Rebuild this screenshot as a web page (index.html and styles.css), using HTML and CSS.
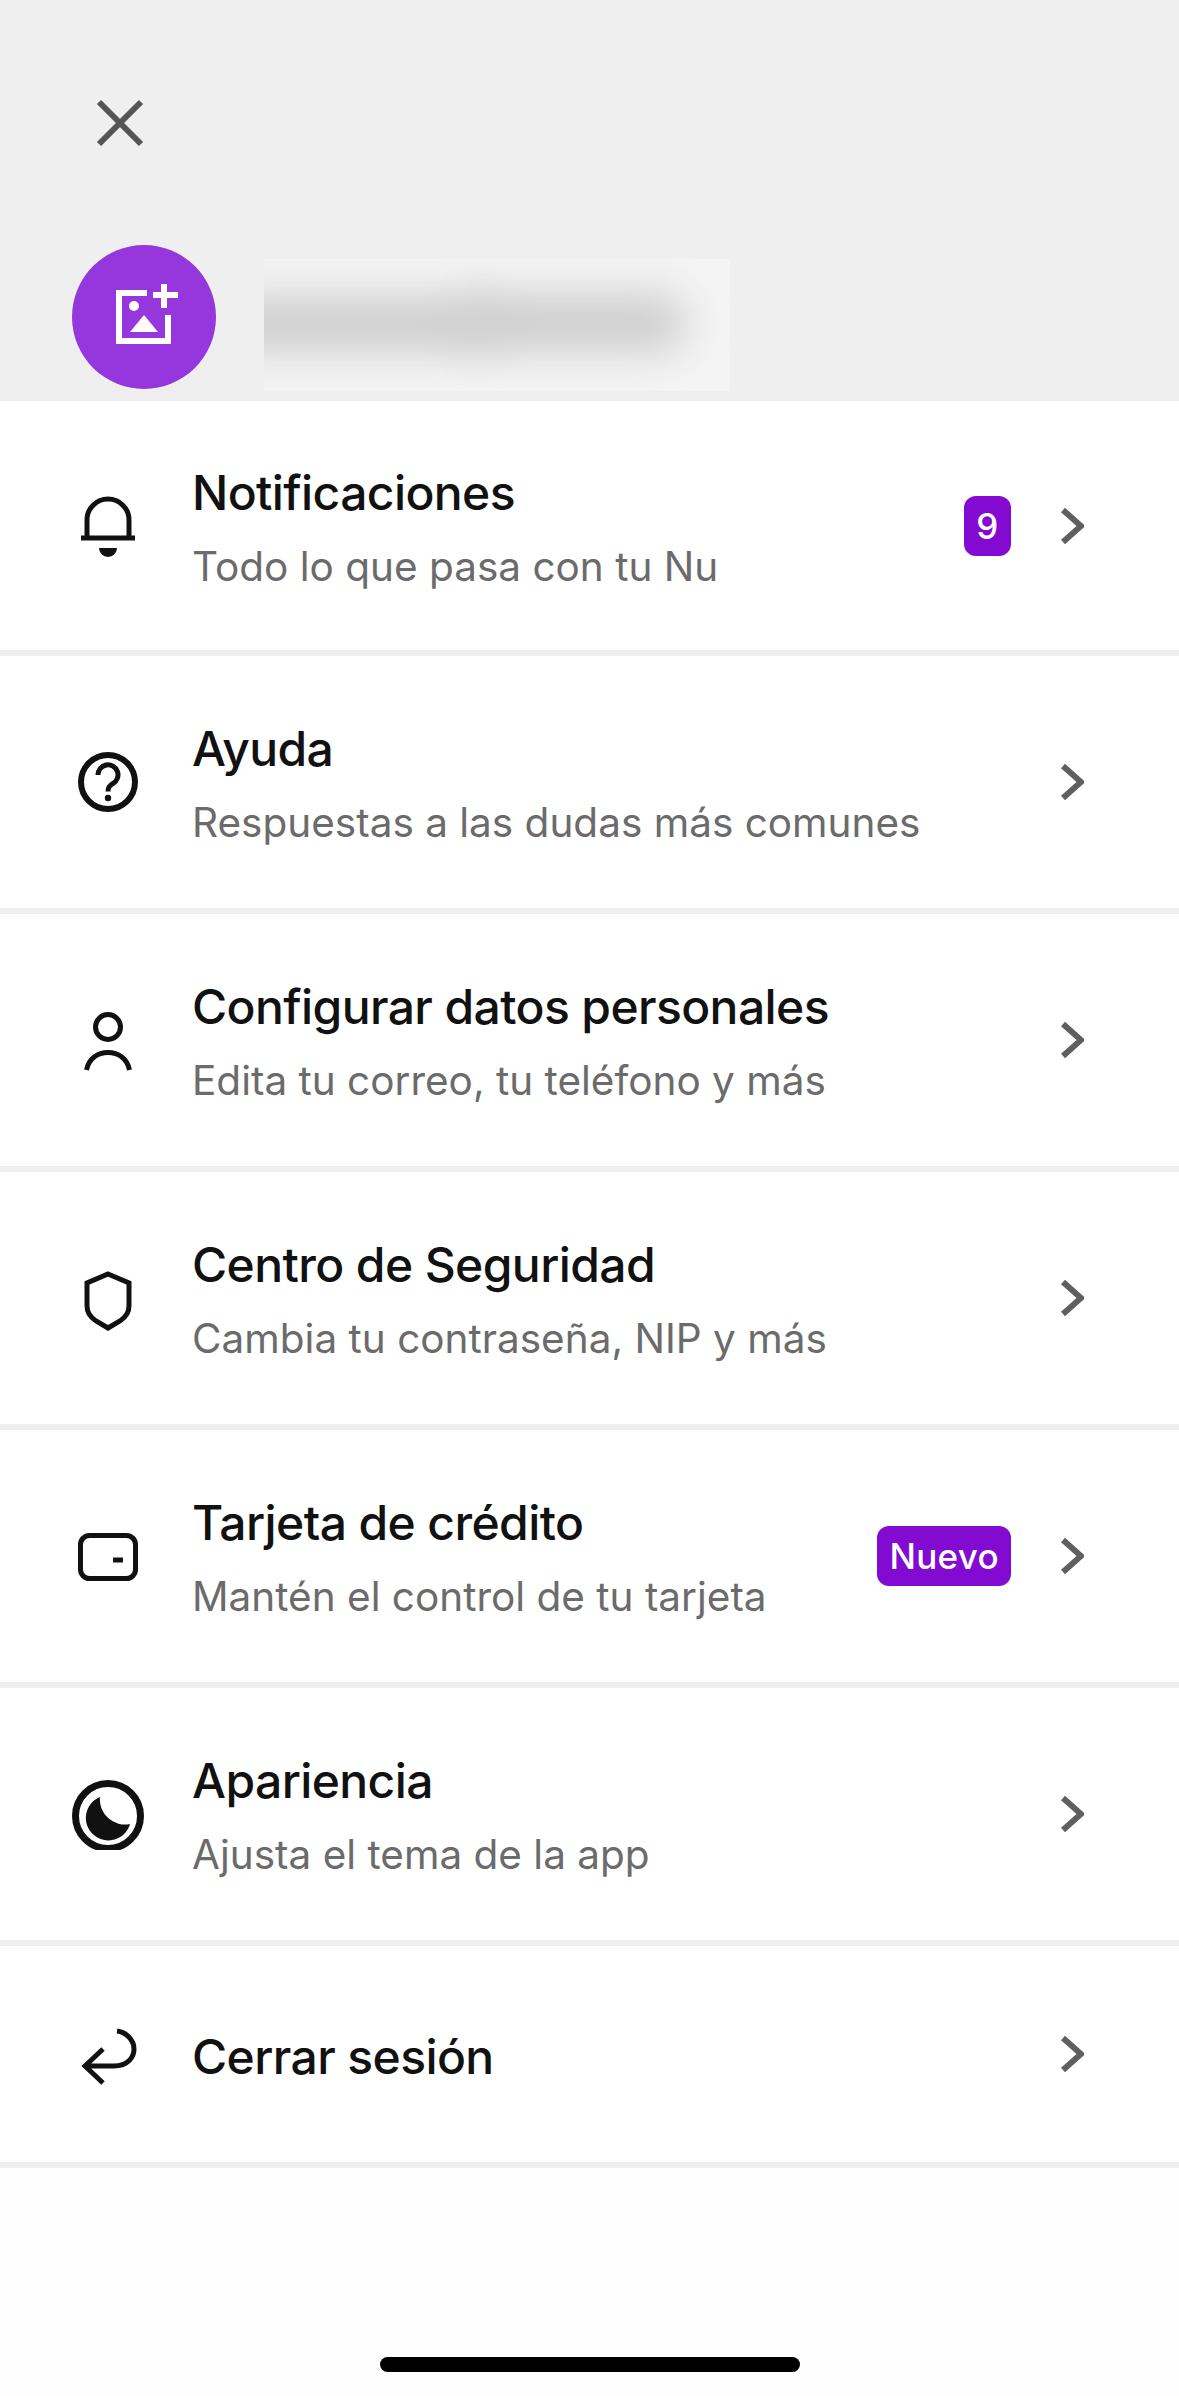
FILE: index.html
```html
<!DOCTYPE html>
<html lang="es">
<head>
    <meta charset="UTF-8">
    <meta name="viewport" content="width=device-width, initial-scale=1.0">
    <title>Perfil</title>
    <link rel="stylesheet" href="styles.css">
</head>
<body>

<header class="top">
    <button class="close" aria-label="Cerrar">
        <svg viewBox="0 0 48 48" width="48" height="48"><path d="M3 3 L45 45 M45 3 L3 45"/></svg>
    </button>
    <div class="profile">
        <div class="avatar">
            <svg viewBox="0 0 144 144" width="144" height="144">
                <path class="line" d="M75 48 H47 V96 H96 V70"/>
                <path class="line" d="M92 39 V63 M81 50 H106"/>
                <circle cx="62" cy="61" r="5"/>
                <path d="M72 70 L86 87 H58 Z"/>
            </svg>
        </div>
        <div class="name-blur"><span class="blob-a"></span><span class="blob-b"></span></div>
    </div>
</header>

<main class="menu">
    <a class="row">
        <svg class="icon" viewBox="0 0 72 72"><path d="M15 48 V30 a21 21 0 0 1 42 0 V48 M9 48 H63"/><path class="solid" d="M27 58 H45 a9 9 0 0 1 -18 0 Z"/></svg>
        <div class="text">
            <div class="title">Notificaciones</div>
            <div class="sub">Todo lo que pasa con tu Nu</div>
        </div>
        <span class="badge">9</span>
        <svg class="chevron" viewBox="0 0 24 40"><path d="M3 4 L21 20 L3 36"/></svg>
    </a>
    <a class="row">
        <svg class="icon" viewBox="0 0 72 72"><circle cx="36" cy="36" r="27" stroke-width="6"/><path d="M26 29 a10 10 0 1 1 15 8.500 c-3.500 2 -5 3.500 -5 8"/><circle class="solid" cx="36" cy="52" r="3.200"/></svg>
        <div class="text">
            <div class="title">Ayuda</div>
            <div class="sub">Respuestas a las dudas más comunes</div>
        </div>
        <svg class="chevron" viewBox="0 0 24 40"><path d="M3 4 L21 20 L3 36"/></svg>
    </a>
    <a class="row">
        <svg class="icon" viewBox="0 0 72 72"><circle cx="36" cy="23" r="12.500"/><path d="M14.500 66 C17 54 26 48.500 36 48.500 C46 48.500 55 54 57.500 66"/></svg>
        <div class="text">
            <div class="title">Configurar datos personales</div>
            <div class="sub">Edita tu correo, tu teléfono y más</div>
        </div>
        <svg class="chevron" viewBox="0 0 24 40"><path d="M3 4 L21 20 L3 36"/></svg>
    </a>
    <a class="row">
        <svg class="icon" viewBox="0 0 72 72"><path d="M36 12 L57 21 V44 C57 51 54 55 48 59 L36 66 L24 59 C18 55 15 51 15 44 V21 Z"/></svg>
        <div class="text">
            <div class="title">Centro de Seguridad</div>
            <div class="sub">Cambia tu contraseña, NIP y más</div>
        </div>
        <svg class="chevron" viewBox="0 0 24 40"><path d="M3 4 L21 20 L3 36"/></svg>
    </a>
    <a class="row">
        <svg class="icon" viewBox="0 0 72 72"><rect x="8.500" y="15.500" width="55" height="43" rx="9"/><path d="M41 40 H51"/></svg>
        <div class="text">
            <div class="title">Tarjeta de crédito</div>
            <div class="sub">Mantén el control de tu tarjeta</div>
        </div>
        <span class="badge">Nuevo</span>
        <svg class="chevron" viewBox="0 0 24 40"><path d="M3 4 L21 20 L3 36"/></svg>
    </a>
    <a class="row">
        <svg class="icon" viewBox="0 0 72 72"><circle cx="36" cy="38" r="32.500" stroke-width="7"/><path class="solid" d="M28 19 A22.500 22.500 0 1 0 58 46 A25 25 0 0 1 28 19 Z"/></svg>
        <div class="text">
            <div class="title">Apariencia</div>
            <div class="sub">Ajusta el tema de la app</div>
        </div>
        <svg class="chevron" viewBox="0 0 24 40"><path d="M3 4 L21 20 L3 36"/></svg>
    </a>
    <a class="row row-short">
        <svg class="icon" viewBox="0 0 72 72"><path d="M13 48 H42 C56 48 62 39 62 31 C62 22 54 14 45 13 M31 31 L13 48 L31 65"/></svg>
        <div class="text">
            <div class="title">Cerrar sesión</div>
        </div>
        <svg class="chevron" viewBox="0 0 24 40"><path d="M3 4 L21 20 L3 36"/></svg>
    </a>
</main>

<footer class="home">
    <div class="home-bar"></div>
</footer>

</body>
</html>
```

FILE: styles.css
```css
* {
    box-sizing: border-box;
}
body {
    font-family: Inter, 'Liberation Sans', sans-serif;
    background-color: #fefefe;
    color: #111;
    margin: 0;
    height: 2396px;
    display: flex;
    flex-direction: column;
    overflow: hidden;
}
.top {
    height: 401px;
    background: #efefef;
    padding: 99px 0 0 72px;
    flex-shrink: 0;
}
.close {
    display: block;
    margin-left: 24px;
    padding: 0;
    border: none;
    background: none;
    width: 48px;
    height: 48px;
}
.close svg {
    display: block;
    fill: none;
    stroke: #555;
    stroke-width: 6;
}
.profile {
    display: flex;
    align-items: flex-start;
    gap: 48px;
    margin-top: 98px;
}
.avatar {
    width: 144px;
    height: 144px;
    border-radius: 50%;
    background: #9537dd;
    flex-shrink: 0;
}
.avatar svg {
    display: block;
    fill: #fff;
}
.avatar .line {
    fill: none;
    stroke: #fff;
    stroke-width: 6;
}
.name-blur {
    position: relative;
    width: 466px;
    height: 132px;
    margin-top: 14px;
    background: #f4f4f4;
    overflow: hidden;
}
.blob-a, .blob-b {
    position: absolute;
    background: #cdcdcd;
    filter: blur(20px);
    border-radius: 20px;
}
.blob-a {
    left: -50px;
    top: 38px;
    width: 280px;
    height: 54px;
}
.blob-b {
    left: 200px;
    top: 36px;
    width: 220px;
    height: 56px;
}
.menu {
    flex-shrink: 0;
}
.row {
    display: flex;
    align-items: center;
    height: 255px;
    padding: 0 95px 0 72px;
    background: #fff;
    border-bottom: 6px solid #efefef;
}
.row + .row {
    height: 258px;
}
.row-short, .row + .row-short {
    height: 222px;
}
.icon {
    width: 72px;
    height: 72px;
    flex-shrink: 0;
    fill: none;
    stroke: #111;
    stroke-width: 5;
}
.icon .solid {
    fill: #111;
    stroke: none;
}
.text {
    flex: 1;
    margin-left: 48px;
    padding-top: 6px;
}
.title {
    font-size: 48px;
    font-weight: 500;
    line-height: 60px;
    letter-spacing: -0.6px;
}
.sub {
    font-size: 40.500px;
    line-height: 56px;
    margin-top: 16px;
    color: #6b6b6b;
}
.badge {
    height: 60px;
    min-width: 47px;
    padding: 0 12px;
    margin-right: 49px;
    border-radius: 12px;
    background: #820ad1;
    color: #fff;
    font-size: 35px;
    font-weight: 500;
    line-height: 60px;
    letter-spacing: 0.3px;
    text-align: center;
}
.chevron {
    width: 24px;
    height: 40px;
    flex-shrink: 0;
    fill: none;
    stroke: #5f5f5f;
    stroke-width: 6;
}
.home {
    flex: 1;
    display: flex;
    justify-content: center;
    align-items: flex-end;
    padding-bottom: 24px;
}
.home-bar {
    width: 420px;
    height: 15px;
    border-radius: 8px;
    background: #000;
}
```
